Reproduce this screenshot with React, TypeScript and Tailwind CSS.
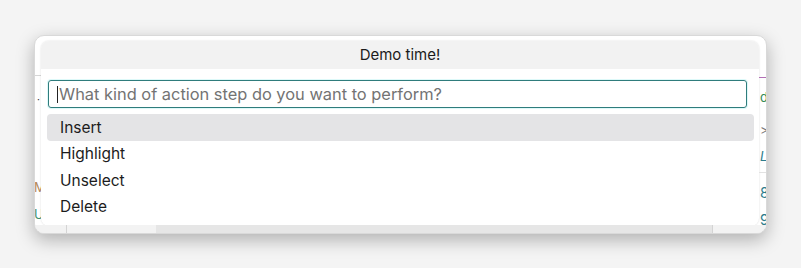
const items = ['Insert', 'Highlight', 'Unselect', 'Delete'];

export default function App() {
  return (
    <div className="w-[801px] h-[268px] bg-[#f4f4f4] pl-[34px] pt-[35px] font-['Inter','Noto_Sans',sans-serif]">
      {/* app window */}
      <div className="w-[733px] h-[199px] rounded-[10px] bg-white border border-[#d9d9d9] shadow-[0_6px_18px_rgba(0,0,0,0.28)] overflow-hidden flex flex-col">
        <div className="flex flex-1 min-h-0">
          {/* left edge of the app behind the dialog */}
          <div className="w-[6px] shrink-0 overflow-hidden flex flex-col text-[13px] leading-none">
            <div className="mt-[39px] border-t border-[#d6d6d6]" />
            <span className="mt-[18px] ml-[2px] text-[10px] text-[#333]">·</span>
            <span className="mt-[77px] -ml-[1px] text-[#b5895a]">M</span>
            <span className="mt-[14px] -ml-[1px] text-[#3f8f6f]">U</span>
          </div>

          {/* dialog */}
          <div className="flex-1 pt-[5px]">
            <div className="h-[185px] rounded-[8px] bg-white overflow-hidden shadow-[0_0_2px_rgba(0,0,0,0.15)]">
              <div className="h-[28px] bg-[#f2f2f2] flex items-center justify-center text-[15px] text-[#1b1b1b]">
                Demo time!
              </div>
              <div className="pl-[7px] pr-[12px] pt-[11px]">
                <div className="h-[28px] rounded-[3px] border border-[#2f7c7c] shadow-[0_0_0_1px_rgba(120,230,230,0.25)] flex items-center pl-[8px]">
                  <span className="w-px h-[17px] bg-[#222] mr-[1px]" />
                  <span className="text-[16.4px] text-[#737373] whitespace-nowrap">
                    What kind of action step do you want to perform?
                  </span>
                </div>
              </div>
              <div className="pl-[6px] pr-[5px] pt-[6px] flex flex-col">
                {items.map((item, i) => (
                  <div
                    key={item}
                    className={`h-[26.5px] rounded-[4px] flex items-center pl-[13px] text-[15.5px] text-[#1c1c1c] ${
                      i === 0 ? 'bg-[#e4e4e6]' : ''
                    }`}
                  >
                    {item}
                  </div>
                ))}
              </div>
            </div>
          </div>

          {/* right edge of the app behind the dialog */}
          <div className="w-[7px] shrink-0 overflow-hidden flex flex-col pl-[1px] text-[13px] leading-none whitespace-nowrap">
            <div className="mt-[41px] -ml-[1px] border-t border-[#b26fb5]" />
            <span className="mt-[13px] text-[#2f8a55]">d</span>
            <span className="mt-[20px] text-[#777]">&gt;</span>
            <span className="mt-[13px] italic text-[#2c7c8c]">L</span>
            <div className="mt-[9px] -ml-[1px] border-t border-[#e2e2e2]" />
            <span className="mt-[13px] text-[14px] text-[#2c7c8c]">8</span>
            <span className="mt-[13px] text-[14px] text-[#2c7c8c]">9</span>
          </div>
        </div>

        {/* bottom bar of the app */}
        <div className="h-[8px] shrink-0 flex bg-[#e6e6e6]">
          <div className="w-[31px] bg-[#f2f2f2]" />
          <div className="w-[90px] border-l border-[#d4d4d4] bg-[#f3f3f3]" />
          <div className="flex-1" />
          <div className="w-[54px] border-l border-[#d4d4d4] bg-[#f3f3f3]" />
        </div>
      </div>
    </div>
  );
}
